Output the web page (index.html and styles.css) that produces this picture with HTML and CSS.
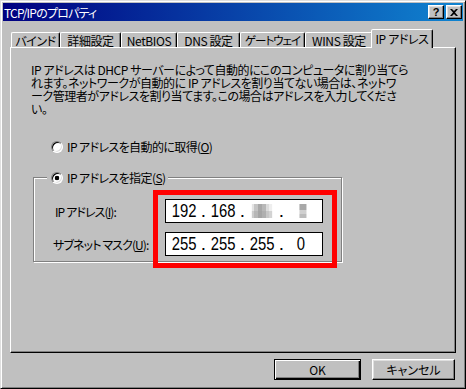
FILE: index.html
```html
<!DOCTYPE html>
<html lang="ja">
<head>
<meta charset="utf-8">
<title>TCP/IPのプロパティ</title>
<link rel="stylesheet" href="styles.css">
</head>
<body>
<div class="window">
  <div class="titlebar">
    <span class="title">TCP/IPのプロパティ</span>
    <div class="tb-buttons">
      <span class="tb-btn help">?</span>
      <span class="tb-btn close">
        <svg width="8" height="7" viewBox="0 0 8 7"><path d="M0 0h2l2 2 2-2h2L5 3.5 8 7H6L4 5 2 7H0l3-3.5z" fill="#000"/></svg>
      </span>
    </div>
  </div>
  <div class="content">
    <div class="tabs">
      <div class="tab t-bind">バインド</div>
      <div class="tab t-detail">詳細設定</div>
      <div class="tab t-netbios">NetBIOS</div>
      <div class="tab t-dns">DNS 設定</div>
      <div class="tab t-gw"><span class="tab-text">ゲートウェイ</span></div>
      <div class="tab t-wins">WINS 設定</div>
      <div class="tab t-ip active">IP アドレス</div>
    </div>
    <div class="panel">
      <p class="desc"><span class="line">IP アドレスは DHCP サーバーによって自動的にこのコンピュータに割り当てら</span><span class="line">れます。ネットワークが自動的に IP アドレスを割り当てない場合は、ネットワ</span><span class="line">ーク管理者がアドレスを割り当てます。この場合はアドレスを入力してくださ</span><span class="line">い。</span></p>
      <div class="radio-row"><span class="radio"></span><span>IP アドレスを自動的に取得(<u>O</u>)</span></div>
      <div class="group">
        <div class="group-label"><span class="radio checked"></span><span>IP アドレスを指定(<u>S</u>)</span></div>
        <div class="fields">
          <span class="field-label ip-label">IP アドレス(<u>I</u>):</span>
          <div class="ipbox">
            <span class="oct">192</span><span class="dot">.</span><span class="oct">168</span><span class="dot">.</span><span class="oct"><span class="blur blur3"></span></span><span class="dot">.</span><span class="oct"><span class="blur blur4"></span></span>
          </div>
          <span class="field-label">サブネット マスク(<u>U</u>):</span>
          <div class="ipbox">
            <span class="oct">255</span><span class="dot">.</span><span class="oct">255</span><span class="dot">.</span><span class="oct">255</span><span class="dot">.</span><span class="oct">0</span>
          </div>
        </div>
        <div class="highlight"></div>
      </div>
    </div>
    <div class="buttons">
      <div class="btn default">OK</div>
      <div class="btn">キャンセル</div>
    </div>
  </div>
</div>
</body>
</html>
```
FILE: styles.css
```css
* { box-sizing: border-box; }
html, body { margin: 0; padding: 0; }
body {
  width: 466px;
  height: 389px;
  overflow: hidden;
  background: #c0c0c0;
  font-family: "Noto Sans CJK JP", "Noto Sans", sans-serif;
  font-size: 12px;
  color: #000;
  font-feature-settings: "palt";
}
.window {
  width: 466px;
  height: 389px;
  background: #c0c0c0;
  border: 1px solid;
  border-color: #dfdfdf #000 #000 #dfdfdf;
  box-shadow: inset 1px 1px #fff, inset -1px -1px #808080;
  padding: 2px;
  display: flex;
  flex-direction: column;
}
.titlebar {
  flex: none;
  height: 18px;
  display: flex;
  align-items: center;
  justify-content: space-between;
  background: linear-gradient(90deg, #000080, #1084d0);
  padding: 0 1px;
  color: #fff;
}
.title { line-height: 13px; white-space: nowrap; letter-spacing: -0.8px; }
.tb-buttons { display: flex; gap: 2px; }
.tb-btn {
  width: 16px;
  height: 14px;
  background: #c0c0c0;
  border: 1px solid;
  border-color: #fff #000 #000 #fff;
  box-shadow: inset -1px -1px #808080, inset 1px 1px #dfdfdf;
  display: flex;
  align-items: center;
  justify-content: center;
  color: #000;
  font: bold 11px/1 "Liberation Sans", sans-serif;
}
.content {
  flex: 1;
  display: flex;
  flex-direction: column;
  padding: 8px 7px 0;
}
.tabs {
  flex: none;
  height: 18px;
  display: flex;
  align-items: flex-end;
  padding-left: 1px;
}
.tab {
  height: 15px;
  border: 1px solid;
  border-bottom: none;
  border-color: #fff #000 transparent #fff;
  border-radius: 2px 2px 0 0;
  box-shadow: inset -1px 0 #808080;
  display: flex;
  align-items: center;
  justify-content: center;
  line-height: 13px;
  white-space: nowrap;
  letter-spacing: -0.4px;
}
.t-bind { width: 49px; }
.t-detail { width: 61px; }
.t-netbios { width: 56px; }
.t-dns { width: 63px; }
.t-gw { width: 65px; }
.t-gw .tab-text { letter-spacing: -1px; font-size: 11.5px; }
.t-wins { width: 68px; }
.t-ip { width: 62px; }
.tab.active {
  height: 19px;
  margin: 0 -2px -1px;
  position: relative;
  z-index: 1;
  background: #c0c0c0;
  align-items: flex-start;
  padding-top: 2px;
}
.panel {
  flex: none;
  height: 306px;
  border: 1px solid;
  border-color: #fff #000 #000 #fff;
  box-shadow: inset -1px -1px #808080;
  padding: 15px 0 0 20px;
}
.desc {
  margin: 0;
  line-height: 13px;
  white-space: nowrap;
  letter-spacing: -0.45px;
}
.line { display: block; height: 13px; }
.radio-row {
  display: flex;
  align-items: center;
  gap: 4px;
  height: 13px;
  margin: 25px 0 0 20px;
  white-space: nowrap;
  letter-spacing: -0.6px;
}
.radio {
  flex: none;
  width: 12px;
  height: 12px;
  border-radius: 50%;
  background: #fff;
  border: 1px solid;
  border-color: #808080 #fff #fff #808080;
  box-shadow: inset 1px 1px #000, inset -1px -1px #dfdfdf;
}
.radio.checked {
  background: radial-gradient(circle, #000 0 2px, #fff 2.6px);
}
.group {
  position: relative;
  width: 309px;
  margin: 24px 0 0 2px;
  border: 1px solid #808080;
  box-shadow: inset 1px 1px #fff, 1px 1px #fff;
  padding: 21px 0 5px 19px;
}
.group-label {
  position: absolute;
  top: -7px;
  left: 13px;
  height: 13px;
  display: flex;
  align-items: center;
  gap: 4px;
  padding: 0 3px 0 4px;
  background: #c0c0c0;
  white-space: nowrap;
  letter-spacing: -0.6px;
}
.fields {
  display: grid;
  grid-template-columns: 112px 158px;
  row-gap: 9px;
  align-items: center;
}
.field-label {
  line-height: 13px;
  white-space: nowrap;
  letter-spacing: -0.9px;
}
.ip-label { padding-left: 2px; }
.ipbox {
  height: 24px;
  background: #fff;
  border: 1px solid #000;
  display: flex;
  align-items: center;
  padding-left: 5px;
  font: 19px/22px "Liberation Sans", sans-serif;
}
.oct {
  width: 26px;
  height: 22px;
  display: flex;
  align-items: center;
  justify-content: center;
  transform: scaleX(0.78);
}
.dot { width: 13px; text-align: center; }
.blur { display: block; height: 14px; }
.blur3 {
  width: 32px;
  background:
    linear-gradient(180deg, rgba(255,255,255,0) 0 50%, rgba(160,160,160,0.35) 50% 100%),
    linear-gradient(90deg, #e4e4e4 0 12%, #c4c4c4 12% 30%, #a8a8a8 30% 50%, #b8b8b8 50% 68%, #dcdcdc 68% 86%, #eeeeee 86% 100%);
}
.blur4 {
  width: 9px;
  margin-left: 4px;
  background: linear-gradient(180deg, #a8a8a8 0 40%, #d0d0d0 40% 70%, #bcbcbc 70% 100%);
}
.highlight {
  position: absolute;
  left: 119px;
  top: 12px;
  width: 184px;
  height: 78px;
  border: 5px solid #ff0000;
}
.buttons {
  flex: none;
  display: flex;
  justify-content: flex-end;
  gap: 11px;
  margin-top: 6px;
  padding-right: 1px;
}
.btn {
  width: 83px;
  height: 21px;
  background: #c0c0c0;
  border: 1px solid;
  border-color: #fff #000 #000 #fff;
  box-shadow: inset -1px -1px #808080, inset 1px 1px #dfdfdf;
  display: flex;
  align-items: center;
  justify-content: center;
  line-height: 13px;
}
.btn.default {
  width: 87px;
  border-color: #000;
  box-shadow: inset 1px 1px #fff, inset -1px -1px #000, inset -2px -2px #808080;
}
```
